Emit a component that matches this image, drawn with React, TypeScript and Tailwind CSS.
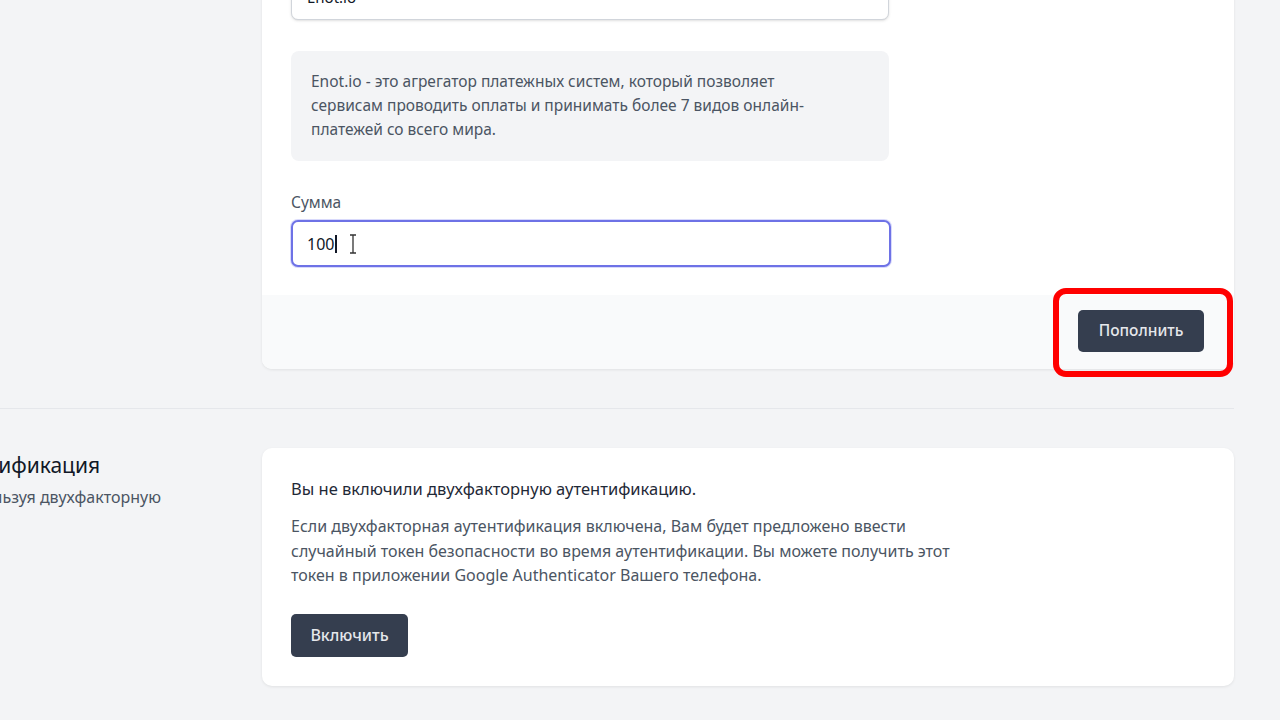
import { ChevronDown } from 'lucide-react';

export default function App() {
  return (
    <div
      className="relative w-[1280px] h-[720px] overflow-hidden bg-[#f3f4f6] text-[#1f2937]"
      style={{ fontFamily: '"Noto Sans", "Open Sans", sans-serif' }}
    >
      <div className="w-[1472px] -ml-[238px] -mt-[55px]">
        {/* payment section */}
        <div className="grid grid-cols-[471px_972px] gap-x-[29px]">
          <div />
          <div className="bg-white rounded-b-[10px] shadow-[0_1px_3px_rgba(0,0,0,0.08)]">
            <div className="px-[29px] pt-[29px] pb-[28px]">
              <div className="w-[598px] h-[46px] flex items-center justify-between px-[15px] border border-[#d1d5db] rounded-[7px] shadow-sm bg-white">
                <span className="text-[15px] text-[#111827]">Enot.io</span>
                <ChevronDown className="w-4 h-4 text-[#6b7280]" />
              </div>
              <div className="w-[598px] mt-[31px] rounded-[8px] bg-[#f3f4f6] pl-[20px] pr-[44px] pt-[18px] pb-[20px] text-[15.5px] leading-[24px] text-[#4b5563]">
                Enot.io - это агрегатор платежных систем, который позволяет сервисам проводить оплаты и принимать более 7 видов онлайн-платежей со всего мира.
              </div>
              <div className="mt-[31px] text-[15.5px] leading-[20px] text-[#4b5563]">Сумма</div>
              <div className="w-[600px] h-[47px] mt-[8px] flex items-center px-[14px] rounded-[7px] border-2 border-[#6e72e6] shadow-[0_0_0_1px_rgba(99,102,241,0.25)] bg-white">
                <span className="text-[16px] text-[#111827]">100</span>
                <span className="w-[1.5px] h-[18px] bg-[#111827] ml-[1px]" />
                <svg width="10" height="20" viewBox="0 0 10 20" className="ml-[11px]">
                  <path d="M2 1 H8 M5 1 V19 M2 19 H8" stroke="#333" strokeWidth="1.3" fill="none" />
                </svg>
              </div>
            </div>
            <div className="h-[74px] bg-[#f9fafb] rounded-b-[10px] flex items-center justify-end pr-[30px]">
              <button className="w-[126px] h-[42px] rounded-[5px] bg-[#353e4f] text-[#e5e7eb] text-[15.5px] font-medium -mt-[2px]">
                Пополнить
              </button>
            </div>
          </div>
        </div>

        {/* divider */}
        <div className="py-[39px]">
          <div className="border-t border-[#e5e7eb] w-[1472px]" />
        </div>

        {/* two factor section */}
        <div className="grid grid-cols-[471px_972px] gap-x-[29px]">
          <div className="pt-[3px]">
            <div className="ml-[7px] text-[21px] leading-[28px] text-[#111827] whitespace-nowrap">Двухфакторная аутентификация</div>
            <div className="-ml-[71px] mt-[7px] text-[16px] leading-[22px] text-[#4b5563] whitespace-nowrap">
              Повысьте безопасность аккаунта, используя двухфакторную
            </div>
            <div className="-ml-[71px] text-[16px] leading-[22px] text-[#4b5563] whitespace-nowrap">аутентификацию.</div>
          </div>
          <div className="bg-white rounded-[10px] shadow-[0_1px_3px_rgba(0,0,0,0.08)] px-[29px] pt-[29px] pb-[29px]">
            <div className="text-[16.5px] leading-[24px] text-[#1f2937]">Вы не включили двухфакторную аутентификацию.</div>
            <div className="mt-[13px] max-w-[680px] text-[16px] leading-[24.5px] text-[#4b5563]">
              Если двухфакторная аутентификация включена, Вам будет предложено ввести случайный токен безопасности во время аутентификации. Вы можете получить этот токен в приложении Google Authenticator Вашего телефона.
            </div>
            <button className="mt-[26px] w-[117px] h-[43px] rounded-[5px] bg-[#353e4f] text-[#e5e7eb] text-[16px] font-medium">
              Включить
            </button>
          </div>
        </div>
      </div>

      {/* highlight around the submit button */}
      <div className="absolute left-[1053px] top-[288px] w-[180px] h-[89px] rounded-[13px] border-[6px] border-[#ff0000]" />
    </div>
  );
}
